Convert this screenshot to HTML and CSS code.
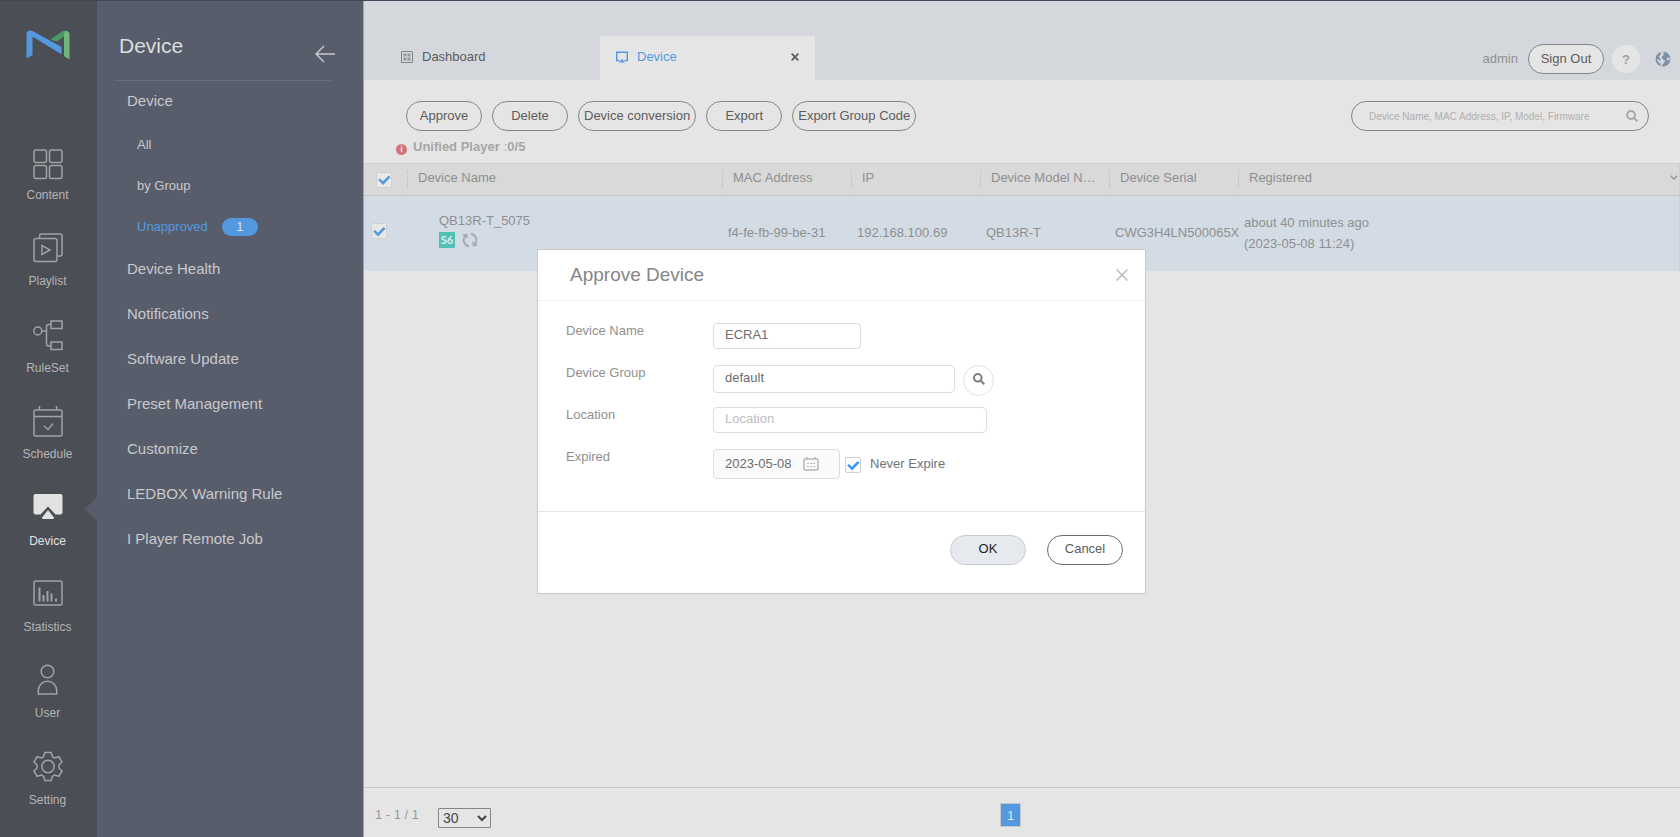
FILE: index.html
```html
<!DOCTYPE html>
<html lang="en">
<head>
    <meta charset="UTF-8">
    <meta name="viewport" content="width=device-width, initial-scale=1.0">
    <title>Device - Unapproved</title>
    <link rel="stylesheet" href="styles.css">
</head>
<body>
    <div class="app">
        <nav class="rail">
            <a class="logo" href="#" aria-label="Home">
                <svg width="44" height="30" viewBox="0 0 44 30">
                    <path fill="#4a9a63" d="M25 9 36 1.500Q39 0 41 1L43 3 31 11.500Q27 11 25 9Z"/>
                    <path fill="#6fb67c" d="M38 3Q39 1 41 1 43.500 1.500 43.500 4.500V29.500L38 26Z"/>
                    <path fill="#5499e0" d="M.5 4.500Q.5.500 4 .5 6 .5 7.500 1.500L35.500 17V24L32.500 22.500 6.500 6.500V25L.5 28.500Z"/>
                </svg>
            </a>
            <div class="rail-items">
                <a class="rail-item" href="#">
                    <svg width="32" height="36" viewBox="0 0 32 36"><rect x="2" y="4" width="12.500" height="12.500" rx="2"/><rect x="17.500" y="4" width="12.500" height="12.500" rx="2"/><rect x="2" y="19.500" width="12.500" height="13" rx="2"/><rect x="17.500" y="19.500" width="12.500" height="13" rx="2"/></svg>
                    Content
                </a>
                <a class="rail-item" href="#">
                    <svg width="32" height="36" viewBox="0 0 32 36"><rect x="2" y="6.500" width="23" height="23" rx="2"/><path d="M7.500 6.500V4a2 2 0 0 1 2-2H28a2 2 0 0 1 2 2v18a2 2 0 0 1-2 2h-3M10 13.500v9l8-4.500z"/></svg>
                    Playlist
                </a>
                <a class="rail-item" href="#">
                    <svg width="32" height="36" viewBox="0 0 32 36"><circle cx="5.800" cy="12" r="4"/><path d="M10 12h4.500M19 5.500h-2.500q-2 0-2 2V25q0 2 2 2H19M19 2h11v7.500H19zM19 23h11v7.500H19z"/></svg>
                    RuleSet
                </a>
                <a class="rail-item" href="#">
                    <svg width="32" height="36" viewBox="0 0 32 36"><rect x="2" y="5" width="28" height="26" rx="1.500"/><path d="M2 11.500h28M7.500 1v4M24.500 1v4M12 21l4 3.500 5-6"/></svg>
                    Schedule
                </a>
                <a class="rail-item active" href="#">
                    <svg width="32" height="36" viewBox="0 0 32 36"><path class="solid" d="M3.500 2h25A2 2 0 0 1 30.500 4V20.500a2 2 0 0 1-2 2h-5L16 14.500 8.500 22.500h-5a2 2 0 0 1-2-2V4a2 2 0 0 1 2-2zM16 18l6 7.500q0 1.500-1 1.500H11q-1 0-1-1.500z"/></svg>
                    Device
                </a>
                <a class="rail-item" href="#">
                    <svg width="32" height="36" viewBox="0 0 32 36"><rect x="2" y="3" width="28" height="24" rx="1.500"/><path class="bars" d="M7.500 9.500v14M11.500 17v6.500M15.500 13v10.500M19.500 15.500v8M24 20.500v3"/></svg>
                    Statistics
                </a>
                <a class="rail-item" href="#">
                    <svg width="32" height="36" viewBox="0 0 32 36"><circle cx="15.500" cy="7.500" r="6.300"/><path d="M6.300 30V26.500a9.200 9.200 0 0 1 18.400 0v3.500z"/></svg>
                    User
                </a>
                <a class="rail-item" href="#">
                    <svg width="32" height="36" viewBox="0 0 32 36"><circle cx="16" cy="15.500" r="6.200"/><path d="M12.800 1.500h6.400l1.200 4.200 2.200 1.200 4.300-1.200 3.100 5.300-3 3v3l3 3-3.100 5.300-4.300-1.200-2.200 1.200-1.200 4.200h-6.400l-1.200-4.200-2.200-1.200-4.300 1.200L2 20l3-3v-3l-3-3 3.100-5.300 4.300 1.200 2.200-1.200z"/></svg>
                    Setting
                </a>
            </div>
        </nav>

        <aside class="sidebar">
            <div class="sidebar-head">
                <h1>Device</h1>
                <button class="back" type="button" aria-label="Collapse menu">
                    <svg width="20" height="18" viewBox="0 0 20 18"><path d="M20 9H1.500M9 1 1 9l8 8"/></svg>
                </button>
            </div>
            <ul class="menu">
                <li>
                    <a href="#">Device</a>
                    <ul class="submenu">
                        <li><a href="#">All</a></li>
                        <li><a href="#">by Group</a></li>
                        <li><a class="current" href="#">Unapproved <span class="count">1</span></a></li>
                    </ul>
                </li>
                <li><a href="#">Device Health</a></li>
                <li><a href="#">Notifications</a></li>
                <li><a href="#">Software Update</a></li>
                <li><a href="#">Preset Management</a></li>
                <li><a href="#">Customize</a></li>
                <li><a href="#">LEDBOX Warning Rule</a></li>
                <li><a href="#">I Player Remote Job</a></li>
            </ul>
        </aside>

        <main class="main">
            <header class="topbar">
                <div class="tabs">
                    <div class="tab">
                        <svg width="12" height="12" viewBox="0 0 12 12"><path fill="none" stroke="#858585" d="M.5.500h11v11H.5z"/><path fill="#999" d="M2.500 2.500h3v3h-3zM6.500 2.500h3v3h-3zM2.500 6.500h3v3h-3zM6.500 6.500h3v3h-3z"/></svg>
                        <a href="#">Dashboard</a>
                    </div>
                    <div class="tab selected">
                        <svg width="12" height="12" viewBox="0 0 12 12"><path fill="none" stroke="#5499e0" stroke-width="1.400" d="M3.500 9.500H.7V1.200h10.600V9.500H8.500"/><path fill="#5499e0" d="M6 8 9 11.500H3z"/></svg>
                        <a href="#">Device</a>
                        <button class="tab-close" type="button" aria-label="Close tab">
                            <svg width="8" height="8" viewBox="0 0 8 8"><path d="M.7.700l6.600 6.600M7.300.700.7 7.300"/></svg>
                        </button>
                    </div>
                </div>
                <div class="account">
                    <span class="username">admin</span>
                    <button class="btn" type="button">Sign Out</button>
                    <button class="help" type="button">?</button>
                    <button class="globe" type="button" aria-label="Language">
                        <svg width="16" height="16" viewBox="0 0 16 16"><circle cx="8" cy="8" r="7.500" fill="#7f90a4"/><path fill="#d4d8dc" d="M5.500 1.200 8 .5 9.500 1 8 2.500 9 4 7.500 5 6.500 7 8 8.500 10 9.500 9 12 7.500 13.500 7 15.500 5.500 15 5.500 12.500 3 11 2 8.500 3.500 8 4 9.500 5.500 10 5 7 3.500 6 5.500 4ZM13 6.500 11.500 7.500 12.500 9.500 14.500 9 15 7Z"/></svg>
                    </button>
                </div>
            </header>

            <div class="toolbar">
                <button class="btn" type="button">Approve</button>
                <button class="btn" type="button">Delete</button>
                <button class="btn" type="button">Device conversion</button>
                <button class="btn" type="button">Export</button>
                <button class="btn" type="button">Export Group Code</button>
                <form class="search">
                    <input type="text" aria-label="Search devices" placeholder="Device Name, MAC Address, IP, Model, Firmware">
                    <button type="button" aria-label="Search">
                        <svg width="12" height="12" viewBox="0 0 12 12"><circle cx="5" cy="5" r="3.900"/><path d="M8 8l3.300 3.300"/></svg>
                    </button>
                </form>
            </div>

            <p class="license"><span class="info">i</span> <b>Unified Player</b> :<b>0/5</b></p>

            <table class="devices">
                <colgroup>
                    <col class="c-check"><col class="c-name"><col class="c-mid"><col class="c-mid"><col class="c-mid"><col class="c-mid"><col>
                </colgroup>
                <thead>
                    <tr>
                        <th><input type="checkbox" aria-label="Select all" checked></th>
                        <th>Device Name</th>
                        <th>MAC Address</th>
                        <th>IP</th>
                        <th>Device Model Name</th>
                        <th>Device Serial</th>
                        <th>
                            <div class="last-head">Registered
                                <button class="columns" type="button" aria-label="Choose columns"><svg width="8" height="5" viewBox="0 0 8 5"><path d="M.7.700 4 4 7.300.700"/></svg></button>
                            </div>
                        </th>
                    </tr>
                </thead>
                <tbody>
                    <tr>
                        <td><input type="checkbox" aria-label="Select QB13R-T_5075" checked></td>
                        <td class="name">
                            QB13R-T_5075
                            <div class="badges">
                                <span class="s6">S6</span>
                                <svg width="16" height="16" viewBox="0 0 16 16"><path fill="none" stroke="#a3acb5" stroke-width="2" d="M7 14.300A6.400 6.400 0 0 1 3.200 3.800M9 1.700a6.400 6.400 0 0 1 3.800 10.500"/><path fill="#a3acb5" d="M0 2.500 5.500 1.500 5.500 7zM16 13.500l-5.500 1V9z"/></svg>
                            </div>
                        </td>
                        <td>f4-fe-fb-99-be-31</td>
                        <td>192.168.100.69</td>
                        <td>QB13R-T</td>
                        <td>CWG3H4LN500065X</td>
                        <td class="registered">about 40 minutes ago<br>(2023-05-08 11:24)</td>
                    </tr>
                </tbody>
            </table>

            <footer class="pager">
                <div class="range">
                    <span>1 - 1 / 1</span>
                    <select aria-label="Rows per page"><option>30</option></select>
                </div>
                <button class="page" type="button">1</button>
            </footer>
        </main>
    </div>

    <div class="overlay">
        <form class="modal" role="dialog" aria-labelledby="modalTitle">
            <div class="modal-head">
                <h2 id="modalTitle">Approve Device</h2>
                <button class="modal-close" type="button" aria-label="Close">
                    <svg width="12" height="12" viewBox="0 0 12 12"><path d="M.5.500l11 11M11.500.500l-11 11"/></svg>
                </button>
            </div>
            <div class="modal-body">
                <div class="field">
                    <label for="deviceName">Device Name</label>
                    <input class="w-name" type="text" id="deviceName" value="ECRA1">
                </div>
                <div class="field">
                    <label for="deviceGroup">Device Group</label>
                    <input class="w-group" type="text" id="deviceGroup" value="default">
                    <button class="pick" type="button" aria-label="Find group">
                        <svg width="12" height="12" viewBox="0 0 12 12"><circle cx="4.800" cy="4.800" r="3.800"/><path d="M7.800 7.800l3.500 3.500"/></svg>
                    </button>
                </div>
                <div class="field">
                    <label for="location">Location</label>
                    <input class="w-location" type="text" id="location" placeholder="Location">
                </div>
                <div class="field">
                    <label for="expired">Expired</label>
                    <div class="date">
                        <input type="text" id="expired" value="2023-05-08" readonly>
                        <svg width="16" height="14" viewBox="0 0 16 14"><rect x="1" y="2" width="14" height="11" rx="1"/><path d="M4 0v2M12 0v2"/><path stroke-width="1" stroke-dasharray="2 1" d="M4 6.500h8M4 9.500h8"/></svg>
                    </div>
                    <div class="never">
                        <input type="checkbox" id="never" checked>
                        <label for="never">Never Expire</label>
                    </div>
                </div>
            </div>
            <div class="modal-foot">
                <button class="btn ok" type="button">OK</button>
                <button class="btn cancel" type="button">Cancel</button>
            </div>
        </form>
    </div>
</body>
</html>
```
FILE: styles.css
```css
* {
    box-sizing: border-box;
}

body {
    margin: 0;
    font-family: "Liberation Sans", Arial, sans-serif;
    font-size: 13px;
    line-height: 16px;
    color: #8f8f8f;
    background-color: #e5e5e5;
}

a {
    color: inherit;
    text-decoration: none;
}

button,
input,
select {
    font-family: inherit;
    font-size: 13px;
    margin: 0;
}

button {
    padding: 0;
    border: none;
    background: none;
    cursor: pointer;
}

svg {
    display: block;
    flex: none;
}

ul {
    list-style: none;
    margin: 0;
    padding: 0;
}

.app {
    display: flex;
    min-height: 100vh;
    border-top: 1px solid #45465a;
}

/* icon rail */
.rail {
    display: flex;
    flex-direction: column;
    flex: none;
    width: 97px;
    background-color: #4b4e55;
}

.logo {
    display: flex;
    justify-content: center;
    height: 145px;
    padding: 29px 2px 0 0;
}

.rail-items {
    flex: 1;
    display: flex;
    flex-direction: column;
}

.rail-item {
    position: relative;
    flex: 1;
    display: flex;
    flex-direction: column;
    align-items: center;
    gap: 5px;
    padding-right: 2px;
    font-size: 12px;
    color: #b3b4b6;
}

.rail-item svg {
    fill: none;
    stroke: #a0a2a5;
    stroke-width: 1.5;
}

.rail-item .bars {
    stroke-width: 2;
}

.rail-item .solid {
    fill: #e2e2e3;
    stroke: none;
}

.rail-item.active {
    color: #e2e2e3;
}

.rail-item.active::after {
    content: "";
    position: absolute;
    right: 0;
    top: 5px;
    border: 12px solid transparent;
    border-left: none;
    border-right-color: #585d6b;
}

/* side menu */
.sidebar {
    flex: none;
    width: 267px;
    background-color: #585d6b;
    border-right: 1px solid #a3a5ab;
    color: #c8c9cb;
}

.sidebar-head {
    display: flex;
    justify-content: space-between;
    height: 80px;
    margin: 0 32px 0 17px;
    padding: 33px 0 0 5px;
    border-bottom: 1px solid #6b6e78;
}

.sidebar-head h1 {
    margin: 0;
    font-size: 21px;
    font-weight: normal;
    line-height: 24px;
    color: #dcdddf;
}

.back {
    align-self: flex-start;
    margin: 11px -4px 0 0;
}

.back svg {
    fill: none;
    stroke: #c8c9cb;
    stroke-width: 1.5;
}

.menu a {
    display: flex;
    align-items: center;
    height: 45px;
    padding: 0 0 2px 30px;
    font-size: 15px;
}

.menu > li:first-child > a {
    height: 43px;
    padding-bottom: 4px;
}

.menu .submenu a {
    height: 41px;
    padding: 0 0 0 40px;
    font-size: 13px;
}

.menu .submenu .current {
    color: #5499e0;
}

.count {
    width: 36px;
    margin-left: 14px;
    border-radius: 9px;
    line-height: 18px;
    font-size: 12px;
    text-align: center;
    color: #dbe6f2;
    background-color: #5499e0;
}

/* main area */
.main {
    flex: 1;
    min-width: 0;
    display: flex;
    flex-direction: column;
}

.topbar {
    display: flex;
    justify-content: space-between;
    align-items: flex-end;
    height: 79px;
    background-color: #d4d8dc;
}

.tabs {
    display: flex;
    padding-left: 21px;
}

.tab {
    display: flex;
    align-items: center;
    gap: 9px;
    width: 215px;
    height: 44px;
    padding: 0 16px 3px;
    color: #5c5c5c;
}

.tab.selected {
    color: #5499e0;
    background-color: #e5e5e5;
}

.tab-close {
    margin-left: auto;
}

.tab-close svg {
    fill: none;
    stroke: #5c5c5c;
    stroke-width: 1.8;
}

.account {
    display: flex;
    align-items: center;
    padding: 0 9px 6px 0;
}

.username {
    margin-right: 10px;
}

.btn {
    min-width: 76px;
    height: 30px;
    padding: 0 5px 2px;
    border: 1px solid #858585;
    border-radius: 15px;
    color: #5c5c5c;
}

.account .btn {
    background-color: #e5e5e5;
}

.help {
    width: 28px;
    height: 28px;
    margin: 0 15px 0 8px;
    border-radius: 50%;
    font-weight: bold;
    color: #a0a0a0;
    background-color: #e5e5e5;
}

.toolbar {
    display: flex;
    gap: 10px;
    padding: 21px 31px 0 42px;
}

.search {
    display: flex;
    align-items: center;
    width: 298px;
    height: 30px;
    margin-left: auto;
    padding: 0 10px 0 17px;
    border: 1px solid #858585;
    border-radius: 15px;
}

.search input {
    flex: 1;
    min-width: 0;
    padding: 0;
    border: none;
    outline: none;
    font-size: 10px;
    background: none;
}

.search input::placeholder {
    color: #b0b0b0;
}

.search svg,
.pick svg {
    fill: none;
    stroke: #a8a8a8;
    stroke-width: 2;
}

.license {
    display: flex;
    align-items: center;
    height: 32px;
    margin: 0 0 0 32px;
    color: #a6a6a6;
}

.info {
    width: 11px;
    height: 11px;
    margin: 4px 6px 0 0;
    border-radius: 50%;
    font-size: 9px;
    font-weight: bold;
    line-height: 11px;
    text-align: center;
    color: #e5e5e5;
    background-color: #d27579;
}

.license b:first-of-type {
    margin-right: 4px;
}

/* device list */
.devices {
    width: 100%;
    table-layout: fixed;
    border-collapse: separate;
    border-spacing: 0;
    border-right: 1px solid #cfcfcf;
}

.c-check {
    width: 43px;
}

.c-name {
    width: 315px;
}

.c-mid {
    width: 129px;
}

.devices th {
    height: 33px;
    padding: 0 8px 4px 11px;
    border-top: 1px solid #d0d0d0;
    border-bottom: 1px solid #c5c5c5;
    font-weight: normal;
    text-align: left;
    white-space: nowrap;
    overflow: hidden;
    text-overflow: ellipsis;
    background: repeating-linear-gradient(#bcbcbc 0 1px, transparent 1px 2px) left 6px / 1px 18px no-repeat #d9d9d9;
}

.devices th:first-child {
    padding: 0 0 0 12px;
    background-image: none;
}

.devices th:last-child {
    padding-right: 1px;
}

.last-head {
    display: flex;
    align-items: center;
    justify-content: space-between;
}

.columns svg {
    fill: none;
    stroke: #999;
    stroke-width: 1.5;
}

.devices td {
    height: 75px;
    padding: 0 0 3px 6px;
    line-height: 21px;
    background-color: #d3dce5;
    box-shadow: inset 1px 0 #d0d9e2;
}

.devices td:first-child {
    padding: 0 0 5px 7px;
    box-shadow: none;
}

.devices td.name {
    padding: 0 0 9px 32px;
    line-height: 19px;
}

.devices td.registered {
    padding-bottom: 2px;
}

.badges {
    display: flex;
    align-items: center;
    gap: 7px;
    padding-top: 2px;
}

.s6 {
    width: 16px;
    font-family: Lato, sans-serif;
    font-size: 11px;
    font-weight: bold;
    line-height: 16px;
    text-align: center;
    color: #d8eeee;
    background-color: #52c1b5;
}

input[type="checkbox"] {
    appearance: none;
    display: block;
    width: 16px;
    height: 16px;
    border: 1px solid #d0d0d0;
    border-radius: 2px;
    background-color: #e8e8e8;
}

input[type="checkbox"]:checked::before {
    content: "";
    display: block;
    height: 100%;
    background-color: #5499e0;
    clip-path: polygon(8% 53%, 22% 42%, 42% 62%, 84% 22%, 96% 34%, 44% 90%);
}

/* paging */
.pager {
    display: grid;
    grid-template-columns: 1fr auto 1fr;
    align-items: center;
    height: 50px;
    margin-top: auto;
    padding: 5px 34px 0 11px;
    border-top: 1px solid #c9c9c9;
}

.range {
    display: flex;
    align-items: center;
    gap: 19px;
    color: #999;
}

.range select {
    width: 53px;
    height: 20px;
    margin-top: 5px;
    border: 1px solid #858585;
    border-radius: 1px;
    font-size: 14px;
    color: #444;
    background-color: #e5e5e5;
}

.page {
    width: 21px;
    height: 24px;
    border: 1px solid #c5c9cd;
    color: #dbe6f2;
    background-color: #5499e0;
}

/* approve dialog */
.overlay {
    position: fixed;
    inset: 0;
    display: flex;
    align-items: center;
    justify-content: center;
    padding: 5px 0 0 3px;
}

.modal {
    width: 609px;
    border: 1px solid #c9c9c9;
    background-color: #fff;
}

.modal-head {
    display: flex;
    align-items: center;
    justify-content: space-between;
    height: 51px;
    padding: 1px 17px 0 32px;
    border-bottom: 1px solid #f0f0f0;
}

.modal-head h2 {
    margin: 0;
    font-size: 19px;
    font-weight: normal;
    line-height: 22px;
    color: #858585;
}

.modal-close svg {
    fill: none;
    stroke: #bbb;
    stroke-width: 1.5;
}

.modal-body {
    height: 211px;
    padding: 22px 28px;
    border-bottom: 1px solid #e5e5e5;
}

.field {
    display: flex;
    align-items: flex-start;
    height: 42px;
}

.field > label {
    width: 147px;
}

.field input[type="text"] {
    height: 26px;
    padding: 0 11px 2px;
    border: 1px solid #dcdce2;
    border-radius: 4px;
    outline: none;
    color: #6d6d70;
    background-color: #fff;
}

.field input::placeholder {
    color: #bdbdbd;
}

.w-name {
    width: 148px;
}

.field input.w-group {
    width: 242px;
    height: 28px;
}

.w-location {
    width: 274px;
}

.pick {
    display: flex;
    align-items: center;
    justify-content: center;
    width: 31px;
    height: 31px;
    margin-left: 8px;
    padding-bottom: 3px;
    border: 1px solid #e0e0e0;
    border-radius: 50%;
}

.pick svg {
    stroke: #7d7d80;
}

.date {
    display: flex;
    align-items: center;
    width: 127px;
    height: 30px;
    padding-right: 20px;
    border: 1px solid #dcdce2;
    border-radius: 4px;
    background-color: #fafafa;
}

.date input[type="text"] {
    flex: 1;
    min-width: 0;
    padding: 0 0 0 11px;
    border: none;
    background: none;
}

.date svg {
    fill: none;
    stroke: #b5b5b5;
    stroke-width: 1.5;
}

.never {
    display: flex;
    align-items: center;
    height: 30px;
    margin-left: 5px;
    gap: 9px;
    color: #6f747c;
}

.never input[type="checkbox"] {
    margin-top: 3px;
    background-color: #fff;
}

.never input[type="checkbox"]:checked::before {
    background-color: #3d97f7;
}

.modal-foot {
    display: flex;
    justify-content: flex-end;
    gap: 21px;
    padding: 23px 22px 28px;
}

.btn.ok {
    border-color: #c8ccd2;
    color: #222;
    background-color: #e6e9ee;
}

.btn.cancel {
    border-color: #6d6d6d;
}
```
